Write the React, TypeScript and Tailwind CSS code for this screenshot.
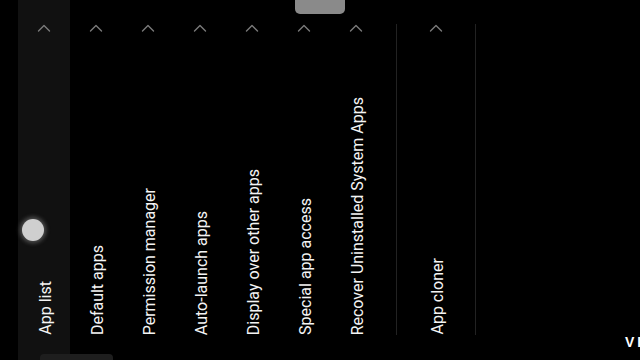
import React from 'react';

const items = [
  'App list',
  'Default apps',
  'Permission manager',
  'Auto-launch apps',
  'Display over other apps',
  'Special app access',
  'Recover Uninstalled System Apps',
];

const Chevron: React.FC = () => (
  <svg width="14" height="8" viewBox="0 0 14 8" fill="none" stroke="#7a7a7a" strokeWidth="1.4" strokeLinecap="round" strokeLinejoin="round">
    <path d="M1.5 7L7 1.5L12.5 7" />
  </svg>
);

const Column: React.FC<{ label: string; active?: boolean; width: string }> = ({ label, active, width }) => (
  <div className={`${width} h-full flex flex-col items-center pt-[24px] pb-[25px] ${active ? 'bg-[#111111]' : ''}`}>
    <Chevron />
    <div className="flex-1" />
    <span className="[writing-mode:vertical-rl] rotate-180 translate-x-[2px] text-[16px] leading-none text-[#f4f4f4] whitespace-nowrap">
      {label}
    </span>
  </div>
);

export default function App() {
  return (
    <div
      className="relative w-[640px] h-[360px] bg-black overflow-hidden flex"
      style={{ fontFamily: 'Roboto, "Liberation Sans", sans-serif' }}
    >
      <div className="flex h-full pl-[18px]">
        {items.map((label, i) => (
          <Column key={label} label={label} active={i === 0} width="w-[52px]" />
        ))}
      </div>

      {/* second section */}
      <div className="flex h-full ml-[14px]">
        <div className="w-px mt-[24px] mb-[25px] bg-[#222222]" />
        <Column label="App cloner" width="w-[78px]" />
        <div className="w-px mt-[24px] mb-[25px] bg-[#222222]" />
      </div>

      {/* overlays */}
      <div className="absolute left-[295px] top-0 w-[50px] h-[14px] rounded-b-[5px] bg-[#8a8a8a]" />
      <div className="absolute left-[22px] top-[219px] w-[22px] h-[22px] rounded-full bg-[#cfcfcf] shadow-[0_0_4px_2px_rgba(160,160,160,0.45)]" />
      <div className="absolute left-[40px] bottom-0 w-[73px] h-[6px] rounded-t-[4px] bg-[#1e1e1e]" />
      <span className="absolute left-[625px] top-[335px] text-[14px] font-bold tracking-[3px] text-white leading-none" style={{ fontFamily: '"Liberation Sans", sans-serif' }}>VI</span>
    </div>
  );
}
